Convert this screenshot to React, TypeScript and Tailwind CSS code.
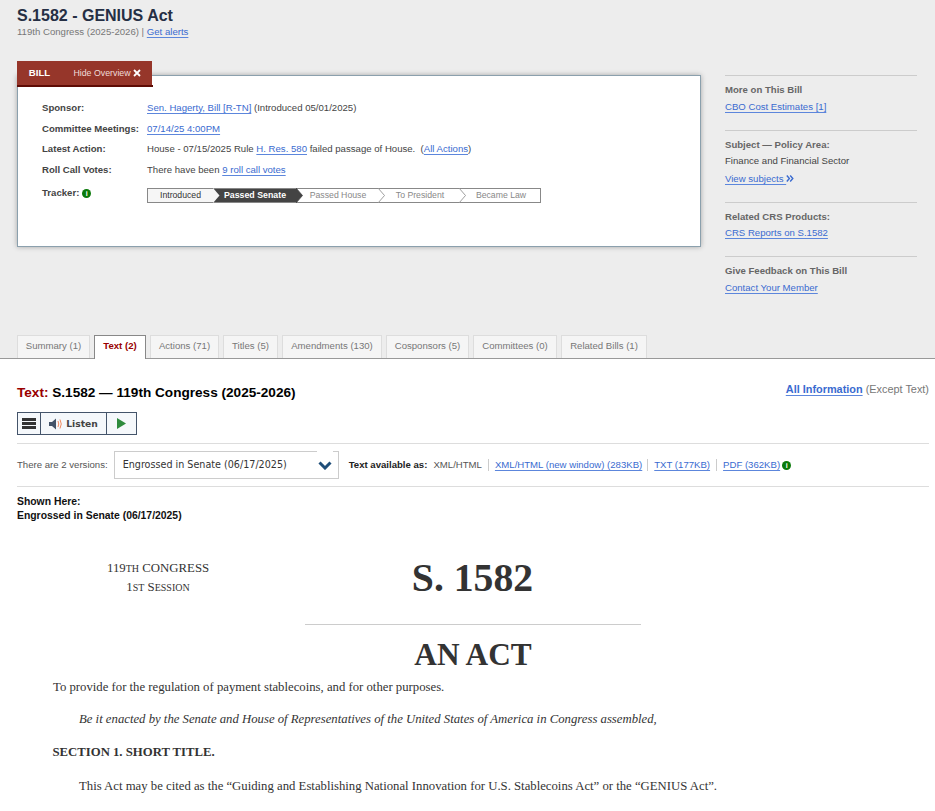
import React from "react";

const sans = "font-['Liberation_Sans',Arial,sans-serif]";
const serif = "font-['Liberation_Serif','Times_New_Roman',serif]";

function L({ children }: { children: React.ReactNode }) {
  return <a className="text-[#3a6bd0] underline decoration-[#5c86dc] underline-offset-[2px]">{children}</a>;
}

function Info() {
  return (
    <span className="inline-flex h-[9px] w-[9px] items-center justify-center rounded-full bg-[#0b7a0b] text-[7px] leading-none font-bold text-white">
      i
    </span>
  );
}

function Row({ label, children, h }: { label: React.ReactNode; children: React.ReactNode; h: string }) {
  return (
    <div className={`flex ${h}`}>
      <div className="w-[105px] shrink-0 font-bold text-[#444]">{label}</div>
      <div className="text-[#444]">{children}</div>
    </div>
  );
}

const steps: [string, string, string][] = [
  ["Introduced", "bg-[#f6f6f6] text-[#333] w-[65px]", ""],
  ["Passed Senate", "bg-[#444] text-white font-bold w-[83px]", "pl-[1px] text-[8.8px]"],
  ["Passed House", "text-[#888] w-[82px]", "pl-[2px]"],
  ["To President", "text-[#888] w-[81px]", "pl-[3px]"],
  ["Became Law", "text-[#888] w-[81px]", "pl-[3px]"],
];

function Tracker() {
  return (
    <div className="flex h-[15px] w-[394px] border border-[#888] bg-white text-[8.7px] leading-[13px]">
      {steps.map(([t, c, s], i) => (
        <div key={t} className={`relative flex shrink-0 items-center justify-center ${c}`}>
          <span className={s}>{t}</span>
          {i < 4 && (
            <svg className="absolute top-[-1px] right-[-7px] z-10" width="7" height="15" viewBox="0 0 7 15">
              <path
                d="M0 0 L6.5 7.5 L0 15"
                fill={i === 0 ? "#f6f6f6" : i === 1 ? "#444" : "#fff"}
                stroke={i === 0 ? "none" : i === 1 ? "#444" : "#888"}
                strokeWidth="0.8"
              />
            </svg>
          )}
        </div>
      ))}
    </div>
  );
}

function Side({ title, children, className, gap }: { title: string; children: React.ReactNode; className: string; gap: string }) {
  return (
    <div className={`border-t border-[#ccc] pt-[7px] ${className}`}>
      <div className={`${gap} leading-[13px] font-bold text-[#666]`}>{title}</div>
      {children}
    </div>
  );
}

const tabs = [
  ["Summary (1)", "w-[73px]"],
  ["Text (2)", "w-[52px]"],
  ["Actions (71)", "w-[69px]"],
  ["Titles (5)", "w-[55px]"],
  ["Amendments (130)", "w-[100px]"],
  ["Cosponsors (5)", "w-[83px]"],
  ["Committees (0)", "w-[84px]"],
  ["Related Bills (1)", "w-[86px]"],
];

export default function App() {
  return (
    <div className={`${sans} h-[811px] w-[935px] overflow-hidden bg-white text-[9.6px]`}>
      <div className="h-[359px] border-b border-[#999] bg-[#ededed] pl-[17px]">
        <h1 className="pt-[6px] text-[16px] leading-[19px] font-bold text-[#252f44]">S.1582 - GENIUS Act</h1>
        <div className="mt-[1px] leading-[12px] text-[#777]">
          119th Congress (2025-2026) | <L>Get alerts</L>
        </div>

        <div className="mt-[23px] flex h-[274px] items-start">
          <div className="relative w-[684px]">
            <div className="absolute top-0 left-0 z-10 w-[136px]">
              <div className="flex h-[24px] w-[135px] bg-[#96362a] text-white">
                <div className="flex w-[45px] items-center justify-center font-bold">BILL</div>
                <div className="flex flex-1 items-center justify-center pt-[1px] text-[8.8px] text-[#f0dcd8]">
                  Hide Overview
                  <svg className="mb-[2px] ml-[2px]" width="8" height="8" viewBox="0 0 8 8">
                    <path d="M1 1 L7 7 M7 1 L1 7" stroke="#fff" strokeWidth="1.8" />
                  </svg>
                </div>
              </div>
              <div className="h-[2px] bg-[#5e0c05]" />
            </div>
            <div className="mt-[14px] h-[172px] w-[684px] border border-[#8ba0ad] bg-white pt-[25px] pl-[24px] shadow-[0_0_5px_rgba(0,0,0,0.3)]">
              <Row label="Sponsor:" h="h-[20.5px]">
                <L>Sen. Hagerty, Bill [R-TN]</L> (Introduced 05/01/2025)
              </Row>
              <Row label="Committee Meetings:" h="h-[20.5px]">
                <L>07/14/25 4:00PM</L>
              </Row>
              <Row label="Latest Action:" h="h-[21px]">
                House - 07/15/2025 Rule <L>H. Res. 580</L> failed passage of House.&nbsp; (<L>All Actions</L>)
              </Row>
              <Row label="Roll Call Votes:" h="h-[23px]">
                There have been <L>9 roll call votes</L>
              </Row>
              <div className="flex">
                <div className="flex w-[105px] shrink-0 items-center gap-[3px] self-start font-bold text-[#444]">
                  Tracker: <Info />
                </div>
                <div className="pt-[2px]">
                  <Tracker />
                </div>
              </div>
            </div>
          </div>

          <div className="mt-[14px] ml-[24px] w-[192px] leading-[13px] text-[#444]">
            <Side title="More on This Bill" className="h-[55px]" gap="mb-[4px]">
              <L>CBO Cost Estimates [1]</L>
            </Side>
            <Side title="Subject — Policy Area:" className="h-[72px]" gap="mb-[3px]">
              <div>Finance and Financial Sector</div>
              <div className="mt-[5px] flex items-center">
                <L>View subjects&nbsp;</L>
                <svg width="8" height="7" viewBox="0 0 8 7">
                  <path d="M0.8 0.5 L3.4 3.5 L0.8 6.5 M4.2 0.5 L6.8 3.5 L4.2 6.5" fill="none" stroke="#3a6bd0" strokeWidth="1.4" />
                </svg>
              </div>
            </Side>
            <Side title="Related CRS Products:" className="h-[54px]" gap="mb-[3px]">
              <L>CRS Reports on S.1582</L>
            </Side>
            <Side title="Give Feedback on This Bill" className="h-[55px]" gap="mb-[4px]">
              <L>Contact Your Member</L>
            </Side>
          </div>
        </div>

        <div className="flex h-[24px] gap-[4px]">
          {tabs.map(([t, w]) => {
            const active = t === "Text (2)";
            return (
              <div
                key={t}
                className={`flex ${w} shrink-0 items-center justify-center border border-b-0 pb-[2px] ${
                  active ? "z-10 h-[24px] border-[#888] bg-white font-bold text-[#990000]" : "h-[23px] border-[#ddd] bg-[#f5f5f5] text-[#777]"
                }`}
              >
                {t}
              </div>
            );
          })}
        </div>
      </div>

      <div className="relative pr-[6px] pl-[17px]">
        <div className="flex h-[53px] items-start justify-between pt-[24px]">
          <h2 className="mt-[1px] text-[13.6px] leading-[18px] font-bold text-black">
            <span className="text-[#990000]">Text:</span> S.1582 — 119th Congress (2025-2026)
          </h2>
          <div className="text-[10.9px] leading-[13px] text-[#777]">
            <span className="font-bold">
              <L>All Information</L>
            </span>{" "}
            (Except Text)
          </div>
        </div>

        <div className="flex h-[23px] w-[120px] border border-[#44546a] bg-[#f5f8fb] text-[#444]">
          <div className="flex w-[23px] flex-col items-center justify-center gap-[1px] border-r border-[#44546a]">
            <div className="h-[3px] w-[14px] bg-[#333]" />
            <div className="h-[3px] w-[14px] bg-[#333]" />
            <div className="h-[3px] w-[14px] bg-[#333]" />
          </div>
          <div className="flex w-[66px] items-center justify-center gap-[3px] border-r border-[#44546a] font-['DejaVu_Sans',sans-serif] text-[9.2px] font-bold">
            <svg width="14" height="12" viewBox="0 0 14 12">
              <path d="M0 4 H3 L7 0.5 V11.5 L3 8 H0 Z" fill="#44546a" />
              <path d="M9 3 Q10.5 6 9 9 M11 1.5 Q13.5 6 11 10.5" fill="none" stroke="#f08a60" strokeWidth="1" />
            </svg>
            Listen
          </div>
          <div className="flex flex-1 items-center justify-center">
            <svg width="9" height="11" viewBox="0 0 9 11">
              <path d="M0 0 L9 5.5 L0 11 Z" fill="#2e8b3d" />
            </svg>
          </div>
        </div>

        <div className="mt-[8px] flex h-[44px] items-center border-t border-b border-[#ddd]">
          <span className="text-[#555]">There are 2 versions:</span>
          <div className="relative ml-[6px] flex h-[28px] w-[225px] items-center border border-[#ccc] pl-[8px] font-['DejaVu_Sans',sans-serif] text-[9.6px] text-[#333]">
            Engrossed in Senate (06/17/2025)
            <div className="absolute top-[-1px] right-[5px] flex h-[19px] w-[16px] items-end justify-center bg-white">
              <svg width="14" height="9" viewBox="0 0 14 9">
                <path d="M1.5 1.5 L7 7 L12.5 1.5" fill="none" stroke="#1f4e79" strokeWidth="3" />
              </svg>
            </div>
          </div>
          <span className="ml-[10px] font-bold text-[#222]">Text available as:</span>
          <span className="ml-[6px] border-r border-[#ccc] pr-[6px] leading-[12px] text-[#555]">XML/HTML</span>
          <span className="border-r border-[#ccc] pr-[5px] pl-[6px] leading-[12px]">
            <L>XML/HTML (new window) (283KB)</L>
          </span>
          <span className="border-r border-[#ccc] px-[6px] leading-[12px]">
            <L>TXT (177KB)</L>
          </span>
          <span className="flex items-center gap-[2px] pl-[6px] leading-[12px]">
            <L>PDF (362KB)</L>
            <Info />
          </span>
        </div>

        <div className="mt-[8px] text-[10.4px] leading-[14px] font-bold text-[#111]">
          <div>Shown Here:</div>
          <div>Engrossed in Senate (06/17/2025)</div>
        </div>

        <div className={`${serif} relative text-[#333]`}>
          <div className="flex h-[101px] pt-[25px]">
            <div className="w-[283px] pt-[11px] pl-[90px] text-[12.8px] leading-[18px]">
              <div className="w-[102px] text-center whitespace-nowrap">
                119<span className="text-[10px]">TH</span> CONGRESS
              </div>
              <div className="w-[102px] text-center whitespace-nowrap">
                1<span className="text-[10px]">ST</span> S<span className="text-[10px]">ESSION</span>
              </div>
            </div>
            <div className="w-[345px] pt-[6px] text-center text-[39.7px] leading-[48px] font-bold">S. 1582</div>
          </div>
          <div className="ml-[288px] h-px w-[336px] bg-[#ccc]" />
          <div className="mb-[4px] ml-[288px] w-[336px] pt-[10px] text-center text-[31.3px] leading-[40px] font-bold">AN ACT</div>
          <div className="pl-[36px] text-[12.74px] leading-[16px]">
            <p>To provide for the regulation of payment stablecoins, and for other purposes.</p>
            <p className="mt-[16px] pl-[26px] italic">
              Be it enacted by the Senate and House of Representatives of the United States of America in Congress assembled,
            </p>
            <p className="mt-[17px] -ml-[0.5px] font-bold">SECTION 1. SHORT TITLE.</p>
            <p className="mt-[18px] pl-[26px]">
              This Act may be cited as the “Guiding and Establishing National Innovation for U.S. Stablecoins Act” or the “GENIUS Act”.
            </p>
          </div>
        </div>
      </div>
    </div>
  );
}
